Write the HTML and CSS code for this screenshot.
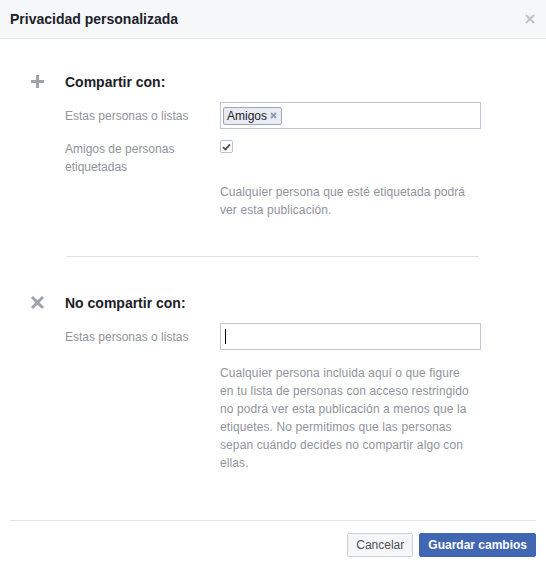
FILE: index.html
```html
<!DOCTYPE html>
<html lang="es">
<head>
<meta charset="utf-8">
<title>Privacidad personalizada</title>
<link rel="stylesheet" href="styles.css">
</head>
<body>
<div class="dialog">
  <div class="header">
    <h1 class="title">Privacidad personalizada</h1>
    <span class="close" aria-label="Cerrar">
      <svg width="10" height="10" viewBox="0 0 10 10"><path d="M1 1L9 9M9 1L1 9" stroke="#bec2c9" stroke-width="2" fill="none"/></svg>
    </span>
  </div>

  <div class="section section-first">
    <div class="icon">
      <svg width="15" height="15" viewBox="0 0 15 15"><path d="M7.5 1V14M1 7.5H14" stroke="#9ea3ab" stroke-width="3" fill="none"/></svg>
    </div>
    <div class="main">
      <h2 class="heading">Compartir con:</h2>
      <div class="row row-input">
        <div class="label">Estas personas o listas</div>
        <div class="field">
          <div class="input">
            <span class="token">Amigos<span class="token-x">
              <svg width="7" height="7" viewBox="0 0 7 7"><path d="M1 1L6 6M6 1L1 6" stroke="#8d9bbd" stroke-width="1.8" fill="none"/></svg>
            </span></span>
          </div>
        </div>
      </div>
      <div class="row row-check">
        <div class="label">Amigos de personas etiquetadas</div>
        <div class="field">
          <span class="checkbox">
            <svg width="9" height="8" viewBox="0 0 9 8"><path d="M1 4.2L3.4 6.4L8 1.4" stroke="#4b4f56" stroke-width="1.8" fill="none"/></svg>
          </span>
        </div>
      </div>
      <div class="row row-help row-help-first">
        <div class="label"></div>
        <p class="help">Cualquier persona que esté etiquetada podrá<br>ver esta publicación.</p>
      </div>
    </div>
  </div>

  <hr class="divider">

  <div class="section section-second">
    <div class="icon">
      <svg width="15" height="15" viewBox="0 0 15 15"><path d="M2 2L13 13M13 2L2 13" stroke="#9ea3ab" stroke-width="3" fill="none"/></svg>
    </div>
    <div class="main">
      <h2 class="heading">No compartir con:</h2>
      <div class="row row-input">
        <div class="label">Estas personas o listas</div>
        <div class="field">
          <div class="input"><span class="caret"></span></div>
        </div>
      </div>
      <div class="row row-help row-help-second">
        <div class="label"></div>
        <p class="help">Cualquier persona incluida aquí o que figure<br>en tu lista de personas con acceso restringido<br>no podrá ver esta publicación a menos que la<br>etiquetes. No permitimos que las personas<br>sepan cuándo decides no compartir algo con<br>ellas.</p>
      </div>
    </div>
  </div>

  <div class="footer">
    <button class="btn btn-cancel" type="button">Cancelar</button>
    <button class="btn btn-primary" type="button">Guardar cambios</button>
  </div>
</div>
</body>
</html>
```

FILE: styles.css
```css
* { box-sizing: border-box; }

html, body {
  margin: 0;
  padding: 0;
  background: #ffffff;
}

body {
  font-family: "Liberation Sans", Arial, Helvetica, sans-serif;
  font-size: 12px;
  color: #1d2129;
}

.dialog {
  width: 546px;
  height: 566px;
  display: flex;
  flex-direction: column;
  background: #ffffff;
}

.header {
  height: 39px;
  background: #f6f7f9;
  border-bottom: 1px solid #e5e5e5;
  display: flex;
  align-items: center;
  justify-content: space-between;
  padding: 0 11px 1px 10px;
}

.title {
  margin: 0;
  font-size: 14px;
  font-weight: bold;
  line-height: 18px;
  color: #1d2129;
}

.close {
  display: flex;
  width: 10px;
  height: 10px;
}

.section {
  display: flex;
  padding-left: 30px;
}

.section-first {
  padding-top: 34px;
}

.icon {
  width: 35px;
  flex: none;
  padding-top: 1px;
}

.icon svg { display: block; }

.main {
  display: flex;
  flex-direction: column;
}

.heading {
  margin: 0;
  font-size: 14px;
  font-weight: bold;
  line-height: 18px;
  color: #1d2129;
}

.row {
  display: flex;
}

.label {
  width: 155px;
  flex: none;
  color: #90949c;
  line-height: 18px;
  padding-right: 20px;
}

.field {
  width: 261px;
}

.row-input {
  margin-top: 11px;
  align-items: center;
}

.row-check {
  margin-top: 11px;
}

.input {
  height: 27px;
  border: 1px solid #bdc7d8;
  background: #fff;
  display: flex;
  align-items: center;
  padding: 0 2px;
}

.token {
  display: inline-flex;
  align-items: center;
  height: 18px;
  padding: 0 4px 0 3px;
  background: #e9ebf2;
  border: 1px solid #9fa9bd;
  border-radius: 2px;
  color: #1d2129;
  font-size: 12px;
  line-height: 16px;
}

.token-x {
  display: inline-flex;
  margin-left: 3px;
}

.caret {
  display: block;
  width: 1px;
  height: 15px;
  background: #000;
  margin-left: 2px;
}

.checkbox {
  display: flex;
  align-items: center;
  justify-content: center;
  width: 13px;
  height: 13px;
  border: 1px solid #bec3c9;
  border-radius: 2px;
  background: #fff;
}

.help {
  margin: 0;
  width: 261px;
  color: #90949c;
  line-height: 18px;
  white-space: nowrap;
  letter-spacing: 0.1px;
}

.row-help-first {
  margin-top: 7px;
}

.row-help-second {
  margin-top: 14px;
}

.divider {
  margin: 37px 67px;
  border: 0;
  border-top: 1px solid #dddfe2;
  height: 0;
}

.footer {
  margin: 48px 10px 0 10px;
  border-top: 1px solid #e5e5e5;
  padding-top: 12px;
  display: flex;
  justify-content: flex-end;
  gap: 6px;
}

.btn {
  height: 24px;
  font-family: "Liberation Sans", Arial, Helvetica, sans-serif;
  font-size: 12px;
  line-height: 22px;
  padding: 0 8px;
  border-radius: 2px;
  cursor: pointer;
}

.btn-cancel {
  background: #f6f7f9;
  border: 1px solid #ced0d4;
  color: #4b4f56;
}

.btn-primary {
  background: #4267b2;
  border: 1px solid #4267b2;
  color: #fff;
  font-weight: bold;
}
```
